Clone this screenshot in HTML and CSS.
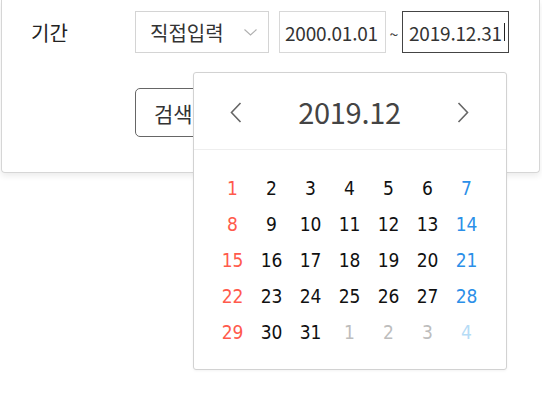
FILE: index.html
```html
<!DOCTYPE html>
<html lang="ko">
<head>
<meta charset="utf-8">
<title>기간 선택</title>
<link rel="stylesheet" href="styles.css">
</head>
<body>
<div class="card">
  <div class="row period">
    <div class="label">기간</div>
    <div class="select">
      <span>직접입력</span>
      <svg class="chev-down" width="13" height="7" viewBox="0 0 13 7"><polyline points="0.5,0.5 6.5,6 12.5,0.5" fill="none" stroke="#b0b0b0" stroke-width="1.1"/></svg>
    </div>
    <div class="date-input">2000.01.01</div>
    <span class="tilde">~</span>
    <div class="date-input focused">2019.12.31<span class="caret"></span></div>
  </div>
  <div class="row actions">
    <button class="btn">검색</button>
  </div>
</div>

<div class="datepicker">
  <div class="dp-head">
    <svg class="nav" width="12" height="21" viewBox="0 0 12 21"><polyline points="10.5,1 1.5,10.5 10.5,20" fill="none" stroke="#666" stroke-width="1.6"/></svg>
    <div class="dp-title">2019.12</div>
    <svg class="nav" width="12" height="21" viewBox="0 0 12 21"><polyline points="1.5,1 10.5,10.5 1.5,20" fill="none" stroke="#666" stroke-width="1.6"/></svg>
  </div>
  <div class="dp-grid">
    <span class="sun">1</span><span>2</span><span>3</span><span>4</span><span>5</span><span>6</span><span class="sat">7</span>
    <span class="sun">8</span><span>9</span><span>10</span><span>11</span><span>12</span><span>13</span><span class="sat">14</span>
    <span class="sun">15</span><span>16</span><span>17</span><span>18</span><span>19</span><span>20</span><span class="sat">21</span>
    <span class="sun">22</span><span>23</span><span>24</span><span>25</span><span>26</span><span>27</span><span class="sat">28</span>
    <span class="sun">29</span><span>30</span><span>31</span><span class="other">1</span><span class="other">2</span><span class="other">3</span><span class="other sat-other">4</span>
  </div>
</div>
</body>
</html>
```
FILE: styles.css
```css
* { box-sizing: border-box; }
html, body { margin: 0; padding: 0; background: #fff; }
body {
  font-family: "Noto Sans CJK KR", "Noto Sans", sans-serif;
  color: #222;
  width: 542px;
  height: 413px;
  overflow: hidden;
  position: relative;
}
.card {
  margin-left: 1px;
  width: 539px;
  height: 173px;
  border: 1px solid #d6d6d6;
  border-top: none;
  border-radius: 0 0 4px 4px;
  box-shadow: 0 3px 6px rgba(0,0,0,0.08);
  padding: 11px 0 0 29px;
}
.row { display: flex; align-items: center; }
.period { height: 42px; }
.label {
  width: 104px;
  font-size: 20px;
  color: #222;
}
.select {
  width: 134px;
  height: 42px;
  border: 1px solid #d4d4d4;
  display: flex;
  align-items: center;
  justify-content: space-between;
  padding: 0 11px 0 14px;
  font-size: 20px;
  color: #333;
}
.chev-down { margin-top: 1px; }
.date-input {
  margin-left: 10px;
  width: 107px;
  height: 42px;
  border: 1px solid #d8d8d8;
  display: flex;
  align-items: center;
  padding-left: 5px;
  font-size: 19px;
  color: #333;
  letter-spacing: -0.2px;
}
.tilde {
  width: 16px;
  text-align: center;
  font-size: 16px;
  color: #444;
  margin-top: 4px;
}
.date-input.focused {
  margin-left: 0;
  border-color: #444;
  padding-left: 6px;
}
.caret {
  display: inline-block;
  width: 1px;
  height: 18px;
  background: #222;
  margin-left: 2px;
}
.actions { margin-top: 35px; padding-left: 104px; }
.btn {
  height: 49px;
  padding: 0 18px;
  width: 100px;
  text-align: left;
  border: 1px solid #666;
  border-radius: 5px;
  background: #fff;
  font-family: "Noto Sans CJK KR", "Noto Sans", sans-serif;
  font-size: 21px;
  color: #333;
}
.datepicker {
  position: absolute;
  left: 193px;
  top: 72px;
  width: 314px;
  height: 298px;
  background: #fff;
  border: 1px solid #d2d2d2;
  border-radius: 3px;
  box-shadow: 0 1px 3px rgba(0,0,0,0.05);
}
.dp-head {
  height: 77px;
  border-bottom: 1px solid #eeeeee;
  display: flex;
  align-items: center;
  justify-content: space-between;
  padding: 0 37px 0 36px;
}
.nav { margin-top: 2px; }
.dp-title {
  font-size: 29px;
  color: #444;
  letter-spacing: -0.3px;
}
.dp-grid {
  display: grid;
  grid-template-columns: repeat(7, 39px);
  grid-auto-rows: 36px;
  padding: 20px 0 0 19px;
  font-family: "DejaVu Sans Condensed", "DejaVu Sans", sans-serif;
  font-size: 19px;
  color: #111;
}
.dp-grid span {
  text-align: center;
  line-height: 36px;
}
.dp-grid .sun { color: #ff5a4c; }
.dp-grid .sat { color: #2b8fe8; }
.dp-grid .other { color: #bdbdbd; }
.dp-grid .sat-other { color: #b6dcf6; }
```
